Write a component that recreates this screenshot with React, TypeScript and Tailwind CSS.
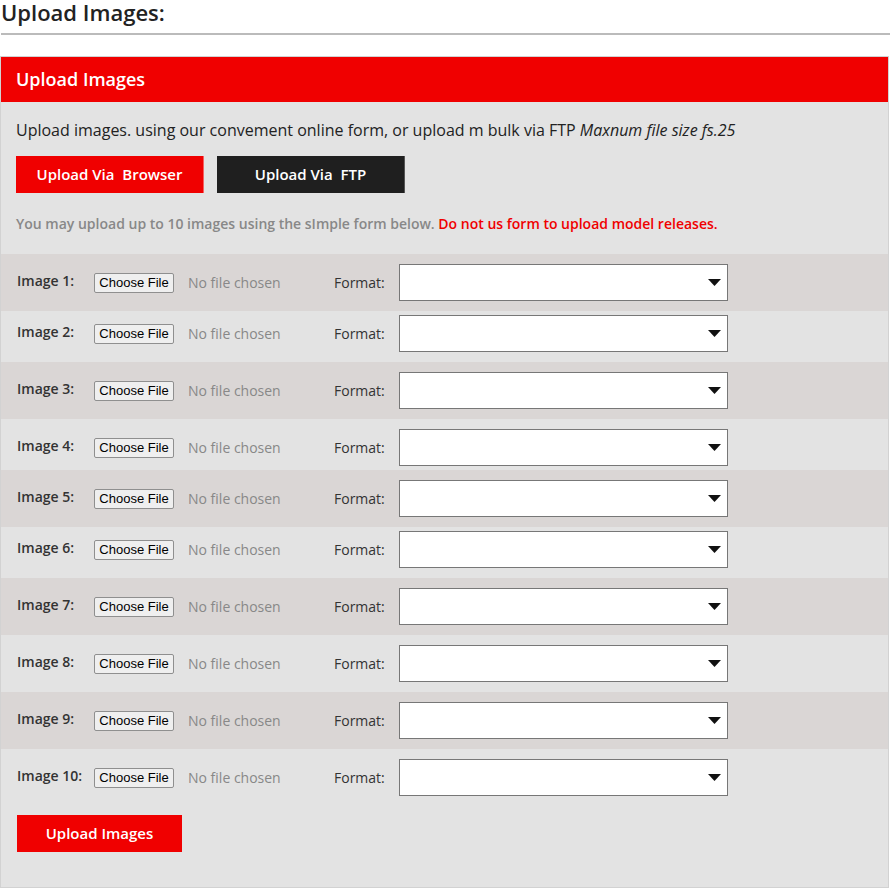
const rows: { pt: string; pb: string; dark: boolean }[] = [
  { pt: "pt-[10px]", pb: "pb-[10px]", dark: true },
  { pt: "pt-[4px]", pb: "pb-[10px]", dark: false },
  { pt: "pt-[10px]", pb: "pb-[10px]", dark: true },
  { pt: "pt-[10px]", pb: "pb-[4px]", dark: false },
  { pt: "pt-[10px]", pb: "pb-[10px]", dark: true },
  { pt: "pt-[4px]", pb: "pb-[10px]", dark: false },
  { pt: "pt-[10px]", pb: "pb-[10px]", dark: true },
  { pt: "pt-[10px]", pb: "pb-[10px]", dark: false },
  { pt: "pt-[10px]", pb: "pb-[10px]", dark: true },
  { pt: "pt-[10px]", pb: "pb-[10px]", dark: false },
];

const ImageRow = ({ n, pt, pb, dark }: { n: number; pt: string; pb: string; dark: boolean }) => (
  <div className={`flex items-center pl-[16px] ${pt} ${pb} ${dark ? "bg-[#dad6d5]" : "bg-[#e3e3e3]"}`}>
    <span className="w-[77px] pb-[4px] text-[14px] font-semibold text-[#333] leading-[20px]">Image {n}:</span>
    <span className="w-[80px] h-[20px] flex items-center justify-center bg-[#efefef] border border-[#8f8f8f] rounded-[2px] text-[13px] text-black [font-family:'Liberation_Sans',Arial,sans-serif]">
      Choose File
    </span>
    <span className="ml-[14px] w-[146px] text-[14px] text-[#888]">No file chosen</span>
    <span className="w-[65px] text-[14px] text-[#333]">Format:</span>
    <div className="w-[329px] h-[37px] bg-white border border-[#777] flex items-center justify-end pr-[6px]">
      <svg width="13" height="7" viewBox="0 0 13 7">
        <path d="M0 0 H13 L6.5 7 Z" fill="#111" />
      </svg>
    </div>
  </div>
);

export default function App() {
  return (
    <div className="w-[890px] bg-white [font-family:'Open_Sans',sans-serif] text-[#222]">
      {/* Page heading */}
      <h1 className="text-[22px] font-semibold leading-[24px] pb-[9px] border-b-2 border-[#bbb] ml-[1px] mb-[21px] text-[#222]">
        Upload Images:
      </h1>

      {/* Panel */}
      <div className="w-[889px] border border-[#d2d2d2] bg-[#e3e3e3]">
        <div className="h-[45px] bg-[#f00000] flex items-center px-[15px]">
          <span className="text-white text-[18px] font-semibold">Upload Images</span>
        </div>

        <div className="px-[15px] pt-[17px]">
          <p className="text-[16px] leading-[22px] text-[#222]">
            Upload images. using our convement online form, or upload m bulk via FTP{" "}
            <em>Maxnum file size fs.25</em>
          </p>
          <div className="flex gap-[13px] mt-[15px]">
            <button className="w-[188px] h-[37px] bg-[#f00000] border-r border-[#f56060] text-white text-[15px] font-semibold whitespace-pre">
              Upload Via  Browser
            </button>
            <button className="w-[188px] h-[37px] bg-[#1f1f1f] border-r border-[#555] text-white text-[15px] font-semibold whitespace-pre">
              Upload Via  FTP
            </button>
          </div>
          <p className="mt-[21px] text-[14px] leading-[20px] font-semibold text-[#888]">
            You may upload up to 10 images using the sImple form below.{" "}
            <span className="text-[#f00000]">Do not us form to upload model releases.</span>
          </p>
        </div>

        {/* Image rows */}
        <div className="mt-[20px]">
          {rows.map((r, i) => (
            <ImageRow key={i} n={i + 1} {...r} />
          ))}
        </div>

        <div className="pl-[16px] pt-[9px] pb-[35px]">
          <button className="w-[165px] h-[37px] bg-[#f00000] text-white text-[15px] font-semibold">
            Upload Images
          </button>
        </div>
      </div>
    </div>
  );
}
